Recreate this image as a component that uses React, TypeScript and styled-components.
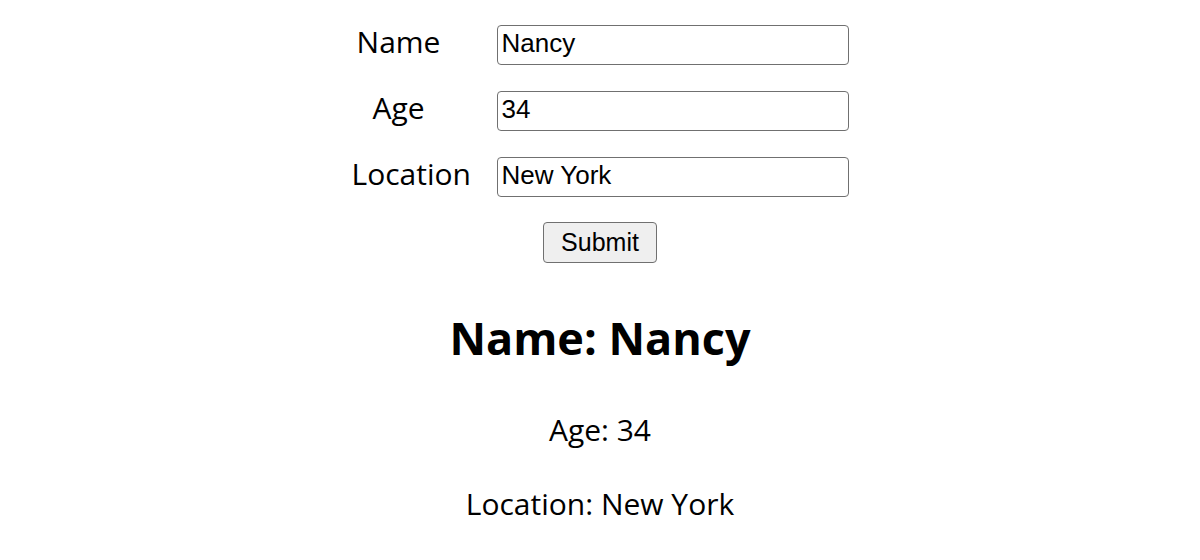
import React, { useState } from "react";
import styled, { createGlobalStyle } from "styled-components";

const GlobalStyle = createGlobalStyle`
  html, body {
    margin: 0;
    padding: 0;
    background: #ffffff;
  }
  body {
    font-family: "Open Sans", "Noto Sans", sans-serif;
    color: #000000;
  }
`;

const Page = styled.main`
  display: flex;
  flex-direction: column;
  align-items: center;
  padding-top: 25px;
`;

const Form = styled.form`
  display: flex;
  flex-direction: column;
  align-items: center;
  gap: 25px;
`;

const Fields = styled.div`
  display: flex;
  flex-direction: column;
  gap: 26px;
`;

const FieldRow = styled.div`
  display: grid;
  grid-template-columns: 94px 352px;
  column-gap: 51px;
  align-items: start;
`;

const Label = styled.label`
  font-family: "Open Sans", "Noto Sans", sans-serif;
  font-size: 30px;
  line-height: 33px;
  text-align: center;
  white-space: nowrap;
  overflow: visible;
`;

const Input = styled.input`
  box-sizing: border-box;
  width: 352px;
  height: 40px;
  margin: 0;
  padding: 0 4px 4px 4px;
  border: 1px solid #707070;
  border-radius: 4px;
  background: #ffffff;
  font-family: "Liberation Sans", Arial, sans-serif;
  font-size: 26px;
  color: #000000;
  outline: none;
`;

const Button = styled.button`
  box-sizing: border-box;
  height: 41px;
  margin: 0;
  padding: 0 17px;
  border: 1px solid #707070;
  border-radius: 4px;
  background: #efefef;
  font-family: "Liberation Sans", Arial, sans-serif;
  font-size: 25px;
  color: #000000;
  cursor: pointer;
`;

const Result = styled.section`
  display: flex;
  flex-direction: column;
  align-items: center;
  margin-top: 44px;
`;

const Heading = styled.h1`
  margin: 0 0 41px;
  font-family: "Open Sans", "Noto Sans", sans-serif;
  font-size: 45px;
  line-height: 61px;
  font-weight: 700;
`;

const Detail = styled.p`
  margin: 0 0 33px;
  font-family: "Open Sans", "Noto Sans", sans-serif;
  font-size: 30px;
  line-height: 41px;
`;

type Person = { name: string; age: string; location: string };

export default function App() {
  const [form, setForm] = useState<Person>({ name: "Nancy", age: "34", location: "New York" });
  const [person, setPerson] = useState<Person>(form);

  const update = (key: keyof Person) => (e: React.ChangeEvent<HTMLInputElement>) =>
    setForm({ ...form, [key]: e.target.value });

  return (
    <>
      <GlobalStyle />
      <Page>
        <Form
          onSubmit={(e) => {
            e.preventDefault();
            setPerson(form);
          }}
        >
          <Fields>
            <FieldRow>
              <Label htmlFor="name">Name</Label>
              <Input id="name" value={form.name} onChange={update("name")} />
            </FieldRow>
            <FieldRow>
              <Label htmlFor="age">Age</Label>
              <Input id="age" value={form.age} onChange={update("age")} />
            </FieldRow>
            <FieldRow>
              <Label htmlFor="location">Location</Label>
              <Input id="location" value={form.location} onChange={update("location")} />
            </FieldRow>
          </Fields>
          <Button type="submit">Submit</Button>
        </Form>
        <Result>
          <Heading>Name: {person.name}</Heading>
          <Detail>Age: {person.age}</Detail>
          <Detail>Location: {person.location}</Detail>
        </Result>
      </Page>
    </>
  );
}
